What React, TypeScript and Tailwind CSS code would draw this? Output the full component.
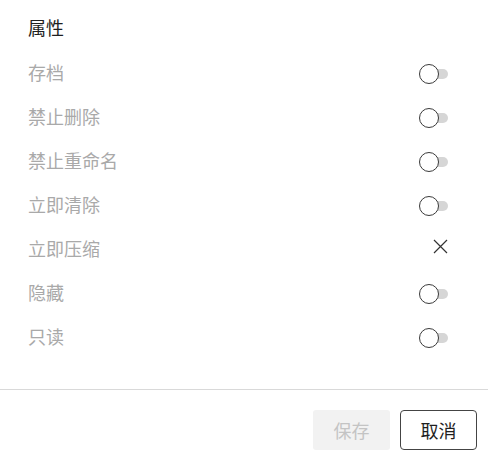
import React from 'react';

const rows: { label: string; kind: 'toggle' | 'close' }[] = [
  { label: '存档', kind: 'toggle' },
  { label: '禁止删除', kind: 'toggle' },
  { label: '禁止重命名', kind: 'toggle' },
  { label: '立即清除', kind: 'toggle' },
  { label: '立即压缩', kind: 'close' },
  { label: '隐藏', kind: 'toggle' },
  { label: '只读', kind: 'toggle' },
];

function Toggle() {
  return (
    <div className="relative w-[29px] h-[20px] mt-[4px]">
      <div className="absolute left-[9px] top-[5px] w-[20px] h-[10px] rounded-full bg-[#d6d6d6]" />
      <div className="absolute left-0 top-0 w-[20px] h-[20px] rounded-full border border-[#3a3a3a] bg-white" />
    </div>
  );
}

function CloseIcon() {
  return (
    <svg width="15" height="15" viewBox="0 0 15 15" className="text-[#333] mb-[4px]">
      <path d="M1 1L14 14M14 1L1 14" stroke="currentColor" strokeWidth="1.2" fill="none" />
    </svg>
  );
}

export default function App() {
  return (
    <div
      className="w-[488px] h-[462px] bg-white flex flex-col"
      style={{ fontFamily: '"Noto Sans CJK SC", "Noto Sans", sans-serif' }}
    >
      <div className="pl-[28px] pr-[40px] pt-[4px]">
        <div className="h-[46px] flex items-center text-[18px] text-[#1f1f1f]">属性</div>
        {rows.map((row) => (
          <div key={row.label} className="h-[44px] flex items-center justify-between">
            <span className="text-[18px] text-[#a9a9a9]">{row.label}</span>
            <div className="w-[29px] flex items-center justify-end">
              {row.kind === 'toggle' ? <Toggle /> : <CloseIcon />}
            </div>
          </div>
        ))}
      </div>
      <div className="mt-[31px] h-px bg-[#d9d9d9]" />
      <div className="pt-[20px] pr-[11px] flex justify-end gap-[10px]">
        <button className="w-[77px] h-[40px] rounded-[3px] bg-[#f2f2f2] text-[18px] text-[#c4c4c4]">保存</button>
        <button className="w-[77px] h-[40px] rounded-[4px] border border-[#444] bg-white text-[18px] text-[#1f1f1f]">取消</button>
      </div>
    </div>
  );
}
